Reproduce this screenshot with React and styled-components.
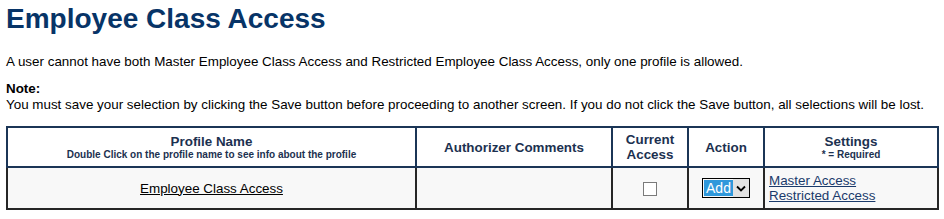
import React from "react";
import styled, { createGlobalStyle } from "styled-components";

const GlobalStyle = createGlobalStyle`
  body {
    margin: 0;
    padding: 0 6px;
    background: #fff;
    font-family: Arial, "Liberation Sans", sans-serif;
    color: #000;
  }
`;

const Page = styled.div`
  width: 932px;
`;

const Title = styled.h1`
  margin: 2px 0 0;
  font-size: 28px;
  line-height: 34px;
  font-weight: 700;
  color: #073467;
`;

const Text = styled.p`
  margin: ${(p) => p.$top || 0}px 0 0;
  font-size: 13.4px;
  line-height: 15px;
`;

const NoteLabel = styled.strong`
  display: block;
  font-weight: 700;
  line-height: 16px;
`;

const Table = styled.table`
  margin-top: 14px;
  width: 931px;
  border-collapse: collapse;
  table-layout: fixed;
`;

const Th = styled.th`
  border: 2px solid #1b3556;
  height: 38px;
  padding: 0;
  color: #1c3150;
  font-weight: 700;
  font-size: 13.4px;
  line-height: 15px;
  text-align: center;
  vertical-align: middle;
`;

const Sub = styled.div`
  font-size: 10px;
  line-height: 12px;
`;

const Td = styled.td`
  border: 2px solid #262626;
  height: 40px;
  padding: 0 ${(p) => (p.$left ? "4px" : "0")};
  background: #f8f8f8;
  text-align: ${(p) => (p.$left ? "left" : "center")};
  vertical-align: middle;
  font-size: 13.4px;
`;

const NameLink = styled.a`
  color: #000;
  text-decoration: underline;
  cursor: pointer;
`;

const SettingLink = styled.a`
  display: block;
  color: #1a3a6b;
  text-decoration: underline;
  line-height: 15px;
  cursor: pointer;
`;

const Check = styled.span`
  display: inline-block;
  width: 12px;
  height: 12px;
  border: 1px solid #7a7a7a;
  background: #fff;
  vertical-align: middle;
`;

const Select = styled.span`
  display: inline-flex;
  align-items: stretch;
  border: 1px solid #000;
  height: 18px;
  vertical-align: middle;
  font-size: 14px;
`;

const SelectValue = styled.span`
  background: #2f98db;
  color: #fff;
  padding: 0 2px;
  margin: 1px 0 1px 1px;
  line-height: 16px;
`;

const Arrow = styled.span`
  width: 16px;
  background: #e2e2e2;
  display: flex;
  align-items: center;
  justify-content: center;
`;

export default function App() {
  return (
    <Page>
      <GlobalStyle />
      <Title>Employee Class Access</Title>
      <Text $top={18}>
        A user cannot have both Master Employee Class Access and Restricted Employee Class Access, only one profile is allowed.
      </Text>
      <Text $top={12}>
        <NoteLabel>Note:</NoteLabel>
        You must save your selection by clicking the Save button before proceeding to another screen. If you do not click the Save button, all selections will be lost.
      </Text>
      <Table>
        <colgroup>
          <col style={{ width: 409 }} />
          <col style={{ width: 196 }} />
          <col style={{ width: 76 }} />
          <col style={{ width: 76 }} />
          <col style={{ width: 174 }} />
        </colgroup>
        <thead>
          <tr>
            <Th>
              Profile Name
              <Sub>Double Click on the profile name to see info about the profile</Sub>
            </Th>
            <Th>Authorizer Comments</Th>
            <Th>
              Current
              <br />
              Access
            </Th>
            <Th>Action</Th>
            <Th>
              Settings
              <Sub>* = Required</Sub>
            </Th>
          </tr>
        </thead>
        <tbody>
          <tr>
            <Td>
              <NameLink>Employee Class Access</NameLink>
            </Td>
            <Td />
            <Td>
              <Check />
            </Td>
            <Td>
              <Select>
                <SelectValue>Add</SelectValue>
                <Arrow>
                  <svg width="10" height="7" viewBox="0 0 10 7">
                    <path d="M1 1.5 L5 5.5 L9 1.5" fill="none" stroke="#000" strokeWidth="1.8" />
                  </svg>
                </Arrow>
              </Select>
            </Td>
            <Td $left>
              <SettingLink>Master Access</SettingLink>
              <SettingLink>Restricted Access</SettingLink>
            </Td>
          </tr>
        </tbody>
      </Table>
    </Page>
  );
}
